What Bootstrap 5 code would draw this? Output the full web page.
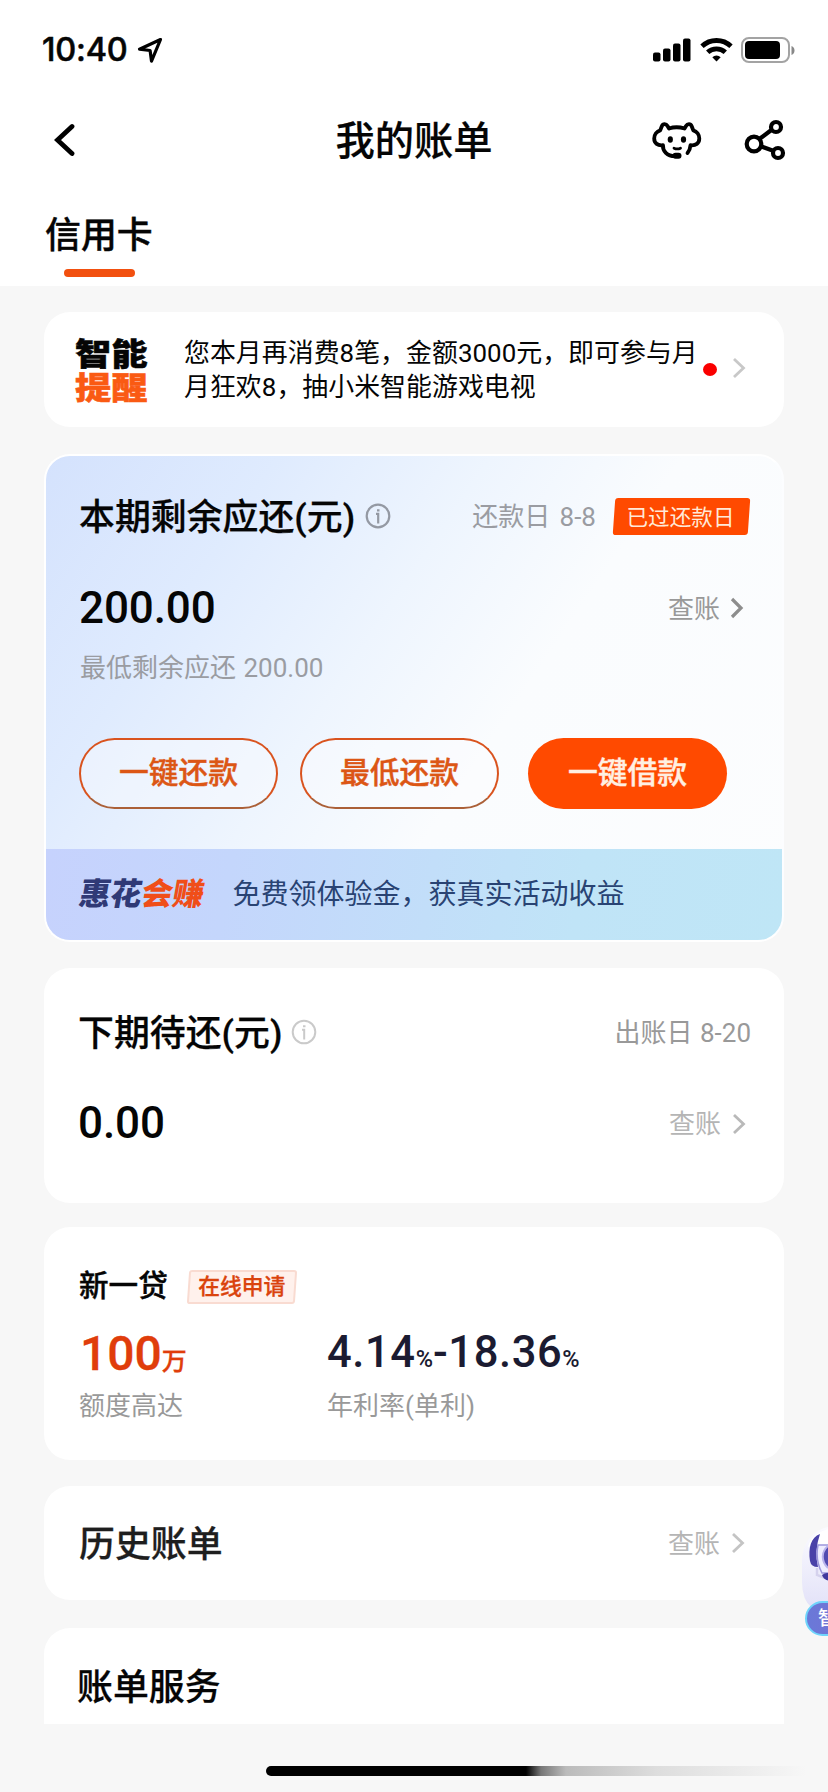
<!DOCTYPE html>
<html lang="zh-CN">
<head>
<meta charset="utf-8">
<meta name="viewport" content="width=device-width, initial-scale=1">
<title>我的账单</title>
<link rel="stylesheet" href="https://cdn.jsdelivr.net/npm/bootstrap@5.3.0/dist/css/bootstrap.min.css">
<style>
  body { width: 828px; height: 1792px; background: #f7f7f7; color: #050505; font-family: Roboto, "Noto Sans CJK SC", sans-serif; font-size: 26px; line-height: 34px; }
  svg { display: block; flex: none; }
  .top-area { height: 286px; }
  .status-row { height: 100px; padding: 0 33px 0 42px; }
  .clock { font: 500 32.5px/1 Inter, sans-serif; letter-spacing: -.2px; -webkit-text-stroke: .5px; }
  .title-row { height: 80px; padding: 0 42px 0 54px; }
  .page-title { font-size: 39.3px; font-weight: 500; padding-top: 5px; -webkit-text-stroke: .2px; }
  .tab-label { font-size: 35.9px; font-weight: 500; line-height: 48px; -webkit-text-stroke: .4px; }
  .tab-box { padding: 32px 0 0 45px; width: 153px; }
  .tab-line { width: 71px; height: 8px; margin: 9px 0 0 19px; background: #f2500f; }
  .panel { margin: 0 44px; background: #fff; border-radius: 26px; padding: 0 34px 0 34px; }
  .notice { margin-top: 26px; height: 115px; padding-left: 31px; }
  .stamp { font: 900 36.3px/40px "Noto Sans CJK SC", sans-serif; width: 76px; transform: translateY(-2px) scaleY(.86); -webkit-text-stroke: .6px; }
  .notice-text { font-size: 25.9px; line-height: 34px; width: 519px; margin-left: 33px; letter-spacing: .04px; }
  .dot { width: 14px; height: 13px; background: #fa0000; border-radius: 50%; }
  .h-main { font-size: 35.9px; font-weight: 500; line-height: 40px; padding-top: 4px; -webkit-text-stroke: .25px; }
  .money { font-size: 44px; font-weight: 500; line-height: 49px; padding-top: 1px; letter-spacing: -.1px; }
  .side-text { padding-top: 1px; }
  .grey { color: #9a9ca2; }
  .grey2 { color: #999; }
  .pale { color: #b5b5b5; }
  .due { margin-top: 27px; height: 488px; border: 2px solid #fff; border-right-color: #fcfdff; background: linear-gradient(124deg, #d4e2fd 0%, #dfebfe 22%, #eef5fe 42%, #fafcfe 60%, #fcfdfe 100%); padding: 0; overflow: hidden; }
  .due-body { height: 393px; padding: 38px 31px 0 33px; }
  .overdue { position: relative; width: 139px; height: 37px; color: #ffe9d8; font-size: 21.6px; padding: 2px 2px 0 0; margin-top: 1px; isolation: isolate; }
  .overdue::before { content: ""; position: absolute; inset: 0 2px; background: #ff4a00; border-radius: 3px; transform: skewX(-4deg); z-index: -1; }
  .pill { width: 199px; height: 71px; border-radius: 36px; font-size: 29.8px; font-weight: 500; padding: 0 0 1px; line-height: 1; -webkit-text-stroke: .4px; }
  .pill-line { color: #dc5615; border: 2px solid #d9531e; border-bottom-color: #ab6038; background: #fdfdfe66; }
  .pill-full { color: #fff0e2; background: #ff4a00; border: 0; }
  .promo { height: 91px; padding-left: 33px; background: linear-gradient(100deg, #c6d2fd 0%, #c4d6fc 25%, #c2def9 52%, #c0e4f7 72%, #bfe6f6 100%); color: #294373; font-size: 28px; }
  .promo-logo { font: 900 31.3px/1 "Noto Sans CJK SC", sans-serif; letter-spacing: -.2px; transform: translate(1px, -3px) skewX(-10deg); color: #303a76; }
  .next { margin-top: 26px; height: 235px; padding-top: 42px; }
  .loan { margin-top: 24px; height: 233px; padding: 37px 34px 0 35px; }
  .loan-name { font-size: 29.6px; font-weight: 500; line-height: 40px; padding-top: 2px; -webkit-text-stroke: .4px; }
  .apply { position: relative; width: 112px; height: 34px; font-size: 21.8px; font-weight: 500; color: #da430d; isolation: isolate; margin: 4px 0 0 18px; -webkit-text-stroke: .3px; }
  .apply::before { content: ""; position: absolute; inset: 0 2px; background: #fff1ec; border: 2px solid #f9dbd1; border-radius: 3px; transform: skewX(-4deg); z-index: -1; }
  .quota { width: 248px; }
  .figure { height: 66px; padding-top: 3px; font-weight: 500; line-height: 56px; }
  .figure-red { font-size: 48px; padding: 3px 0 0 1px; color: #e03d0b; -webkit-text-stroke: .3px; }
  .figure-red small { font-size: 25px; }
  .figure-dark { font-size: 43.5px; padding-top: 2px; color: #1b1b31; letter-spacing: .6px; }
  .figure-dark small { font-size: 23.5px; letter-spacing: 0; }
  .history { margin-top: 26px; height: 114px; padding: 0 39px 0 35px; }
  .history .h-main { color: #1e1e1e; }
  .service { margin-top: 28px; height: 96px; border-radius: 26px 26px 0 0; padding: 36px 0 0 33px; }
  .home-bar { width: 562px; height: 10px; margin: 42px 0 0 266px; border-radius: 5px 0 0 5px; background: linear-gradient(90deg, #000 0 260px, #777 275px, #bbb 300px, #ddd 390px, #f7f7f7 540px); }
  .helper { position: absolute; left: 798px; top: 1520px; width: 30px; height: 120px; overflow: hidden; }
  .helper-tag { position: absolute; left: 7px; top: 81px; width: 80px; height: 35px; border: 2px solid #6fd4fb; border-radius: 18px; background: linear-gradient(90deg, #6a79d8, #7b6ad0); color: #fff; font-size: 19px; font-weight: 500; line-height: 31px; padding-left: 11px; white-space: nowrap; }
</style>
</head>
<body class="position-relative overflow-hidden">
<header class="top-area bg-white">
  <div class="status-row d-flex align-items-center">
    <span class="clock">10:40</span>
    <svg class="ms-2" width="28" height="28" viewBox="0 0 28 28" fill="none" stroke="#000" stroke-width="3.2" stroke-linejoin="round"><path d="M24.5 3.5 3.500 13.200l10.600 1.300 1.400 10.600Z"/></svg>
    <svg class="ms-auto" width="38" height="24" viewBox="0 0 38 24"><rect y="14.500" width="7.500" height="9" rx="2"/><rect x="10" y="10.500" width="7.500" height="13" rx="2"/><rect x="20" y="5.500" width="7.500" height="18" rx="2"/><rect x="30" y=".5" width="7.500" height="23" rx="2"/></svg>
    <svg style="margin-left:9px" width="33" height="24" viewBox="0 0 33 24" fill="none" stroke="#000" stroke-width="4.800"><path d="M2 8.300a21 21 0 0 1 29 0"/><path d="M7.700 14.300a12.800 12.800 0 0 1 17.600 0"/><path d="M12.300 19.200a6 6 0 0 1 8.400 0l-4.200 4.300Z" fill="#000" stroke="none"/></svg>
    <svg style="margin-left:8px" width="54" height="26" viewBox="0 0 54 26"><rect x="1" y="1" width="47" height="24" rx="7" fill="none" stroke="#a3a3a3" stroke-width="2"/><rect x="4" y="4" width="35" height="18" rx="4"/><path d="M50.500 9v9c4-1.500 4-7.500 0-9Z" fill="#888"/></svg>
  </div>
  <div class="title-row d-flex align-items-center position-relative">
    <svg width="22" height="34" viewBox="0 0 22 34" fill="none" stroke="#000" stroke-width="4.800" stroke-linecap="round" stroke-linejoin="miter"><path d="M18 3.500 3.500 17l14.500 13.500"/></svg>
    <h1 class="page-title position-absolute start-50 translate-middle-x m-0">我的账单</h1>
    <svg class="ms-auto" width="50" height="40" viewBox="0 0 50 40" fill="none" stroke="#000" stroke-width="3.800" stroke-linecap="round" stroke-linejoin="round"><path d="M17 8.500Q24.500 6 32.500 8.500L34 6c1.500-2.500 4.500-2.500 5.700.2l1.600 4.200c3.500 1 6 4.300 6 8.200 0 4.600-3.600 7.300-8.800 6.600M17 8.500 15.500 6C14 3.500 11 3.500 9.800 6.200l-1.600 4.200c-3.500 1-6 4.300-6 8.200 0 4.600 3.600 7.300 8.800 6.600C10.500 31 15 36.200 23 36.200M38.500 25.200c-.2 3.300-1.300 5.800-3 7.800"/><path d="M22 28.200q3.300 1.500 6.500 0" stroke-width="2.800"/><ellipse cx="18.300" cy="19.500" rx="2.600" ry="3.300" fill="#000" stroke="none"/><ellipse cx="31.500" cy="19.500" rx="2.600" ry="3.300" fill="#000" stroke="none"/><rect x="20.500" y="32.800" width="9" height="6" rx="3" fill="#000" stroke="none"/></svg>
    <svg style="margin-left:41px" width="43" height="42" viewBox="0 0 43 42" fill="none" stroke="#000" stroke-width="4.200"><circle cx="11" cy="25" r="7.300"/><circle cx="33" cy="8" r="5"/><circle cx="35" cy="34" r="5"/><path d="m17 19.500 12-9M18.500 27.500l11 4"/></svg>
  </div>
  <nav class="tab-box">
    <div class="tab-label text-nowrap">信用卡</div>
    <div class="tab-line rounded-pill"></div>
  </nav>
</header>

<main>
  <section class="panel notice d-flex align-items-center">
    <div class="stamp text-nowrap">智能<br><span style="color:#fa5a13">提醒</span></div>
    <div class="notice-text text-nowrap">您本月再消费8笔，金额3000元，即可参与月<br>月狂欢8，抽小米智能游戏电视</div>
    <span class="dot"></span>
    <svg style="margin:-3px 0 0 15px" width="14" height="22" viewBox="0 0 14 22" fill="none" stroke="#c8c8c8" stroke-width="2.800"><path d="m2 2 9.500 9L2 20"/></svg>
  </section>

  <section class="panel due">
    <div class="due-body">
      <div class="d-flex align-items-center">
        <h2 class="h-main mb-0">本期剩余应还(元)</h2>
        <svg style="margin-left:10px" width="26" height="26" viewBox="0 0 26 26" fill="none" stroke="#9499a3" stroke-width="2.200"><circle cx="13" cy="13" r="11.300"/><path d="M11 10.800h2.200V20.500M12 7.300h2.500"/></svg>
        <span class="grey side-text ms-auto" style="word-spacing:3px">还款日 8-8</span>
        <span class="overdue d-flex align-items-center justify-content-center" style="margin-left:16px">已过还款日</span>
      </div>
      <div class="d-flex align-items-center" style="margin-top:45px">
        <span class="money">200.00</span>
        <span class="grey2 side-text ms-auto">查账</span>
        <svg style="margin:0 7px 0 10px" width="14" height="22" viewBox="0 0 14 22" fill="none" stroke="#8d8d8d" stroke-width="3.200"><path d="m2 2 9 9-9 9"/></svg>
      </div>
      <div class="grey" style="margin-top:18px;padding-left:1px;word-spacing:1px">最低剩余应还 200.00</div>
      <div class="d-flex" style="margin-top:53px">
        <button class="btn pill pill-line">一键还款</button>
        <button class="btn pill pill-line" style="margin-left:22px">最低还款</button>
        <button class="btn pill pill-full" style="margin-left:29px">一键借款</button>
      </div>
    </div>
    <div class="promo d-flex align-items-center">
      <span class="promo-logo">惠花<span style="color:#f04e18">会赚</span></span>
      <span style="margin-left:29px">免费领体验金，获真实活动收益</span>
    </div>
  </section>

  <section class="panel next">
    <div class="d-flex align-items-center">
      <h2 class="h-main mb-0">下期待还(元)</h2>
      <svg style="margin-left:9px" width="26" height="26" viewBox="0 0 26 26" fill="none" stroke="#cacaca" stroke-width="2"><circle cx="13" cy="13" r="11.300"/><path d="M11 10.800h2.200V20.500M12 7.300h2.500"/></svg>
      <span class="grey2 side-text ms-auto" style="word-spacing:1px;margin-right:-1px">出账日 8-20</span>
    </div>
    <div class="d-flex align-items-center" style="margin-top:44px">
      <span class="money">0.00</span>
      <span class="pale side-text ms-auto">查账</span>
      <svg style="margin:2px 4px 0 11px" width="14" height="22" viewBox="0 0 14 22" fill="none" stroke="#b9b9b9" stroke-width="2.800"><path d="m2 2 9.500 9L2 20"/></svg>
    </div>
  </section>

  <section class="panel loan">
    <div class="d-flex align-items-center">
      <h2 class="loan-name mb-0">新一贷</h2>
      <span class="apply d-flex align-items-center justify-content-center">在线申请</span>
    </div>
    <div class="d-flex" style="margin-top:17px">
      <div class="quota">
        <div class="figure figure-red">100<small>万</small></div>
        <div class="grey2">额度高达</div>
      </div>
      <div>
        <div class="figure figure-dark">4.14<small>%</small>-18.36<small>%</small></div>
        <div class="grey2">年利率(单利)</div>
      </div>
    </div>
  </section>

  <section class="panel history d-flex align-items-center">
    <h2 class="h-main mb-0">历史账单</h2>
    <span class="pale side-text ms-auto">查账</span>
    <svg style="margin-left:11px" width="14" height="22" viewBox="0 0 14 22" fill="none" stroke="#c4c4c4" stroke-width="2.800"><path d="m2 2 9.500 9L2 20"/></svg>
  </section>

  <section class="panel service">
    <h2 class="h-main mb-0">账单服务</h2>
  </section>
</main>
<div class="home-bar"></div>

<aside class="helper">
  <svg width="60" height="90" viewBox="0 0 60 90"><defs><linearGradient id="halo" x2="0" y2="1"><stop stop-color="#fbfbff"/><stop offset="1" stop-color="#e3e2f8"/></linearGradient></defs><path d="M14 88Q4 80 4 62V42C4 20 18 6 40 6v82Z" fill="url(#halo)"/><path d="M10 27Q13 14 30 9v17H12Z" fill="#fff"/><path d="M22 14C13 17 10 28 12 41q1 6 8 6-4-16 2-33Z" fill="#4a42a8"/><path d="M20 25h14v28H24q-7-13-4-28Z" fill="#eeedff" stroke="#9c97dc" stroke-width="1.500"/><path d="M30 26c-7 6-7 15 0 22" fill="#514bb0" stroke="#b8b3ec" stroke-width="2"/><path d="M19 48v7l8 3" fill="none" stroke="#d5d2ed" stroke-width="2.500"/><path d="M24 55q5-4 10 0v6q-8 0-10-6Z" fill="#40399e"/></svg>
  <div class="helper-tag">智能客服</div>
</aside>
<script src="https://cdn.jsdelivr.net/npm/bootstrap@5.3.0/dist/js/bootstrap.bundle.min.js"></script>
</body>
</html>
